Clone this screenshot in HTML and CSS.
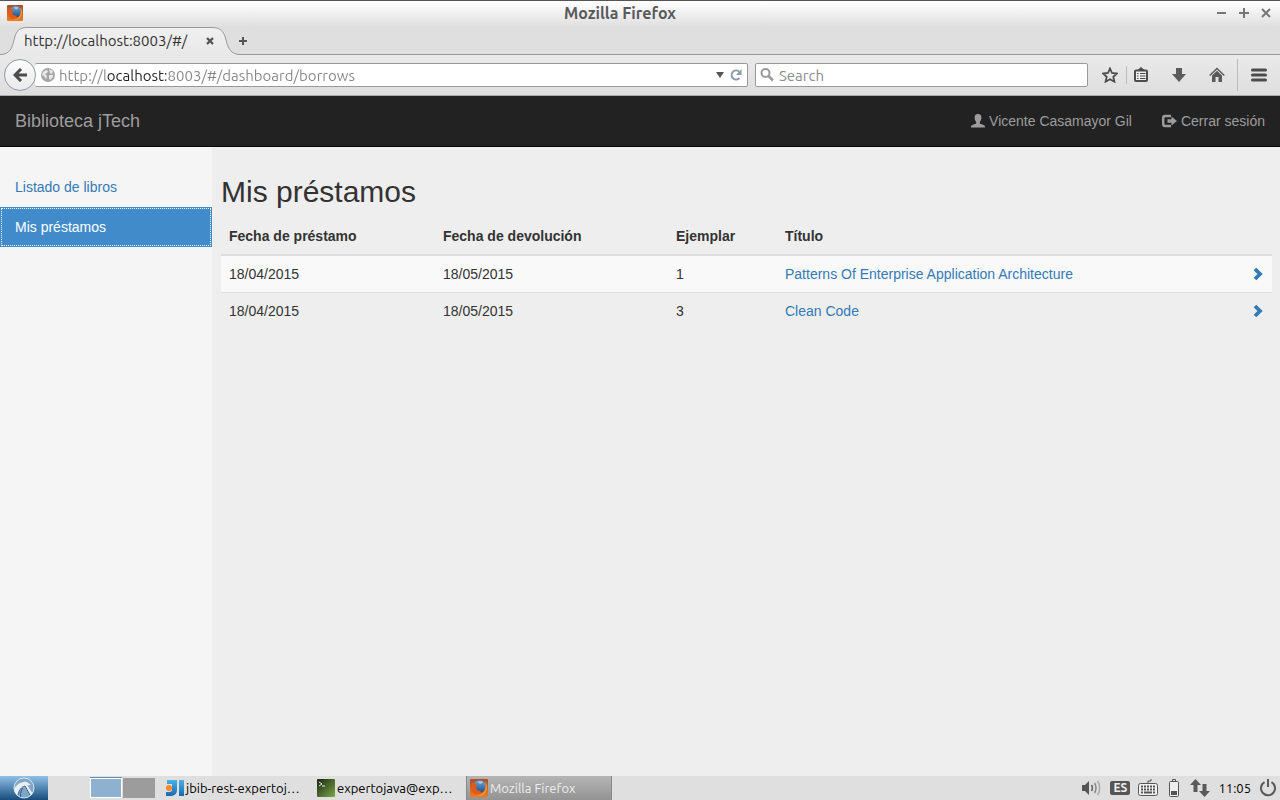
FILE: index.html
```html
<!DOCTYPE html>
<html lang="es">
<head>
<meta charset="utf-8">
<title>Biblioteca jTech</title>
<link rel="stylesheet" href="styles.css">
</head>
<body>
<svg class="defs" width="0" height="0" aria-hidden="true">
  <defs>
    <linearGradient id="fox-bg" x1="0" y1="0" x2="0" y2="1"><stop offset="0" stop-color="#a8502f"/><stop offset="1" stop-color="#f07b21"/></linearGradient>
    <linearGradient id="globe-bg" x1="0" y1="0" x2="0" y2="1"><stop offset="0" stop-color="#69a9dc"/><stop offset="1" stop-color="#163f78"/></linearGradient>
    <linearGradient id="tab-bg" x1="0" y1="0" x2="0" y2="1"><stop offset="0" stop-color="#f0f0f0"/><stop offset="1" stop-color="#e8e8e8"/></linearGradient>
    <linearGradient id="term-bg" x1="0" y1="0" x2="1" y2="1"><stop offset="0" stop-color="#182514"/><stop offset="1" stop-color="#7da845"/></linearGradient>
    <linearGradient id="idea-bg" x1="0" y1="0" x2="0" y2="1"><stop offset="0" stop-color="#48b0e8"/><stop offset="1" stop-color="#1c69ae"/></linearGradient>
    <symbol id="firefox" viewBox="0 0 18 18">
      <rect width="18" height="18" rx="1" fill="url(#fox-bg)"/>
      <circle cx="9.500" cy="8.500" r="7" fill="url(#globe-bg)"/>
      <path d="M8 2.500C10 1.500 12 2 13 3L11 5L9 4.500Z" fill="#9cc8ea"/>
      <path d="M2.500 3L4 4.500L7 5L5.500 6.500L7.500 7.500L6 8.500C6 11 8 12.500 11 11.500C9.500 13.500 12 14.500 15 11.500C14 15 11 17 8 16.500C3 15.500 0.500 11 1.500 6.500Z" fill="#e05a1a"/>
      <path d="M15 2.500C17.500 5.500 18 11 15 14.500C12.500 17.300 8 17.500 5 15.500C10 16.500 14 14 15 10C15.600 7 15.500 5 15 2.500Z" fill="#f08f2b"/>
    </symbol>
  </defs>
</svg>

<div class="browser">
  <div class="titlebar">
    <svg class="titlebar-logo" width="16" height="16"><use href="#firefox"/></svg>
    <span class="titlebar-name">Mozilla Firefox</span>
    <div class="window-buttons">
      <button type="button" aria-label="Minimizar"><svg width="10" height="10" viewBox="0 0 10 10"><path d="M0 5H9" stroke="#777" stroke-width="2"/></svg></button>
      <button type="button" aria-label="Maximizar"><svg width="10" height="10" viewBox="0 0 10 10"><path d="M0 5H10M5 0V10" stroke="#777" stroke-width="2"/></svg></button>
      <button type="button" aria-label="Cerrar"><svg width="10" height="10" viewBox="0 0 10 10"><path d="M1 1L9 9M9 1L1 9" stroke="#777" stroke-width="2"/></svg></button>
    </div>
  </div>
  <div class="tabstrip">
    <div class="tab">
      <svg class="tab-shape" width="240" height="30" viewBox="0 0 240 30"><path d="M0 30V28.500C10 28.500 12 22 14 14C16 5 19 1.500 27 1.500H212C220 1.500 224 5 226 14C228 22 231 28.500 240 28.500V30Z" fill="url(#tab-bg)"/><path d="M0 28.500C10 28.500 12 22 14 14C16 5 19 1.500 27 1.500H212C220 1.500 224 5 226 14C228 22 231 28.500 240 28.500" fill="none" stroke="#999"/></svg>
      <span class="tab-title">http://localhost:8003/#/</span>
      <button type="button" class="tab-close" aria-label="Cerrar pestaña"><svg width="8" height="8" viewBox="0 0 8 8"><path d="M1 1L7 7M7 1L1 7" stroke="#555" stroke-width="2.400"/></svg></button>
    </div>
    <button type="button" class="tab-new" aria-label="Nueva pestaña"><svg width="8" height="8" viewBox="0 0 8 8"><path d="M0 4H8M4 0V8" stroke="#555" stroke-width="2"/></svg></button>
  </div>
  <div class="toolbar">
    <button type="button" class="back" aria-label="Atrás"><svg width="14" height="14" viewBox="0 0 14 14"><path d="M14 7H3M8 1L2 7L8 13" fill="none" stroke="#4c4c4c" stroke-width="3"/></svg></button>
    <div class="field address">
      <svg width="14" height="14" viewBox="0 0 14 14"><circle cx="7" cy="7" r="7" fill="#a5a5a5"/><path d="M2 4L5 2L7 3L6 5L4 6L6 8L5 11L3 8L1 7ZM8 1L12 3L11 6L9 5ZM8 7L12 7L12 9L9 12L8 10Z" fill="#e9e9e9"/></svg>
      <input class="address-input" type="text" aria-label="Dirección" value="http://localhost:8003/#/dashboard/borrows">
      <button type="button" aria-label="Historial"><svg width="8" height="6" viewBox="0 0 8 6"><path d="M0 0H8L4 6Z" fill="#555"/></svg></button>
      <button type="button" class="reload" aria-label="Recargar"><svg width="12" height="12" viewBox="0 0 12 12"><path d="M9.500 9A4.500 4.500 0 1 1 9 2.500" fill="none" stroke="#8a9baa" stroke-width="2"/><path d="M11.500 0V6H6Z" fill="#8a9baa"/></svg></button>
    </div>
    <div class="field search">
      <svg width="14" height="14" viewBox="0 0 14 14"><circle cx="5.500" cy="5" r="4" fill="none" stroke="#999" stroke-width="2"/><path d="M8.500 8L13 12.500" stroke="#999" stroke-width="2.500"/></svg>
      <input type="search" aria-label="Buscar" placeholder="Search">
    </div>
    <div class="tools">
      <button type="button" aria-label="Marcador"><svg width="16" height="16" viewBox="0 0 16 16"><path d="M8 1.500L10 6L15 6.500L11.300 9.800L12.400 14.700L8 12.200L3.600 14.700L4.700 9.800L1 6.500L6 6Z" fill="none" stroke="#4c4c4c" stroke-width="1.800"/></svg></button>
      <span class="divider"></span>
      <button type="button" aria-label="Marcadores"><svg width="14" height="16" viewBox="0 0 14 16"><path d="M3 3.500L7 0L11 3.500Z" fill="#4c4c4c"/><rect x="1" y="3.500" width="12" height="10.500" rx="1" fill="#eee" stroke="#4c4c4c" stroke-width="2"/><path d="M3 6.500H4.500M6 6.500H11.500M3 9H4.500M6 9H11.500M3 11.500H4.500M6 11.500H11.500" stroke="#4c4c4c"/></svg></button>
      <button type="button" aria-label="Descargas"><svg width="14" height="14" viewBox="0 0 14 14"><path d="M4 0H10V6H14L7 14L0 6H4Z" fill="#5a5a5a"/></svg></button>
      <button type="button" aria-label="Inicio"><svg width="16" height="16" viewBox="0 0 16 16"><path d="M0.700 8.500L8 1.500L15.300 8.500" fill="none" stroke="#5a5a5a" stroke-width="1.500"/><path d="M3 8.500L8 3.800L13 8.500V15H9.500V10H6.500V15H3Z" fill="#5a5a5a"/></svg></button>
      <span class="divider divider-tall"></span>
      <button type="button" aria-label="Menú"><svg width="16" height="14" viewBox="0 0 16 14"><path d="M1.500 2H14.500M1.500 7H14.500M1.500 12H14.500" stroke="#4c4c4c" stroke-width="3" stroke-linecap="round"/></svg></button>
    </div>
  </div>
</div>

<header class="navbar">
  <a class="brand" href="#">Biblioteca jTech</a>
  <nav class="user-nav">
    <a href="#"><svg width="14" height="14" viewBox="0 0 14 14"><path d="M7 0C9.500 0 10.400 1.500 10.400 3.800C10.400 5.600 9.500 7 8.800 8V9.500L13 11.300C13.700 11.700 14 12.200 14 13.500H0C0 12.200 0.300 11.700 1 11.300L5.200 9.500V8C4.500 7 3.600 5.600 3.600 3.800C3.600 1.500 4.500 0 7 0Z" fill="currentColor"/></svg>Vicente Casamayor Gil</a>
    <a href="#"><svg width="15" height="14" viewBox="0 0 15 14"><path d="M9 2H3C1.800 2 1.200 2.800 1.200 4V10C1.200 11.200 1.800 12 3 12H9" fill="none" stroke="currentColor" stroke-width="2.400"/><path d="M5.500 5.200H9.500V2.500L15 7L9.500 11.500V8.800H5.500Z" fill="currentColor"/></svg>Cerrar sesión</a>
  </nav>
</header>

<div class="page">
  <nav class="sidebar">
    <a href="#">Listado de libros</a>
    <a class="active" href="#" aria-current="page">Mis préstamos</a>
  </nav>
  <main class="content">
    <h1>Mis préstamos</h1>
    <table class="borrows">
      <colgroup><col class="col-start"><col class="col-end"><col class="col-copy"><col><col class="col-open"></colgroup>
      <thead>
        <tr><th scope="col">Fecha de préstamo</th><th scope="col">Fecha de devolución</th><th scope="col">Ejemplar</th><th scope="col">Título</th><th></th></tr>
      </thead>
      <tbody>
        <tr><td>18/04/2015</td><td>18/05/2015</td><td>1</td><td><a href="#">Patterns Of Enterprise Application Architecture</a></td><td class="open"><a href="#" aria-label="Ver préstamo"><svg width="11" height="14" viewBox="0 0 11 14"><path d="M2 2L7 7L2 12" fill="none" stroke="currentColor" stroke-width="3.800"/></svg></a></td></tr>
        <tr><td>18/04/2015</td><td>18/05/2015</td><td>3</td><td><a href="#">Clean Code</a></td><td class="open"><a href="#" aria-label="Ver préstamo"><svg width="11" height="14" viewBox="0 0 11 14"><path d="M2 2L7 7L2 12" fill="none" stroke="currentColor" stroke-width="3.800"/></svg></a></td></tr>
      </tbody>
    </table>
  </main>
</div>

<footer class="taskbar">
  <button type="button" class="start" aria-label="Menú de inicio"><svg width="24" height="22" viewBox="0 0 24 22"><circle cx="12" cy="11" r="10" fill="#7fa6c6" stroke="#d9e5ee"/><path d="M2.500 11C6 6 11 4 15 5L19 8L15.500 8.500C18 12 19 15 21 16L18 18.500L13 10C9 11 6.500 14 6 19C3.500 17 2 14 2.500 11Z" fill="#e6eef4"/><path d="M6 18C7 13 9.500 10 13 9L18 18M11 10.500C9 13 8.500 16 8.500 20" fill="none" stroke="#2d5f8b"/></svg></button>
  <div class="pager"><button type="button" class="desk current" aria-label="Escritorio 1"></button><button type="button" class="desk" aria-label="Escritorio 2"></button></div>
  <div class="tasks">
    <button type="button" class="task"><svg width="18" height="18" viewBox="0 0 18 18"><path d="M1 1H11V11C11 15 8 17 4 17H0V13H3C5 13 6 12 6 11V5H1Z" fill="url(#idea-bg)"/><rect x="13" y="1" width="5" height="16" fill="url(#idea-bg)"/><circle cx="3" cy="9" r="3" fill="#f58a2b"/></svg><span>jbib-rest-expertoj…</span></button>
    <button type="button" class="task"><svg width="18" height="18" viewBox="0 0 18 18"><rect width="18" height="18" rx="1" fill="url(#term-bg)"/><path d="M2 3L5 5L2 7M5 7H8" fill="none" stroke="#e8eee4"/></svg><span>expertojava@exp…</span></button>
    <button type="button" class="task focused"><svg width="18" height="18"><use href="#firefox"/></svg><span>Mozilla Firefox</span></button>
  </div>
  <div class="tray">
    <svg width="20" height="18" viewBox="0 0 20 18"><path d="M0 6H3L7 2V16L3 12H0Z" fill="#555"/><path d="M9.500 6Q11.500 9 9.500 12" fill="none" stroke="#666" stroke-width="1.500"/><path d="M12.500 4Q15.500 9 12.500 14" fill="none" stroke="#888" stroke-width="1.500"/><path d="M15.500 2Q20 9 15.500 16" fill="none" stroke="#aaa" stroke-width="1.500"/></svg>
    <span class="keyboard-lang">ES</span>
    <svg width="20" height="18" viewBox="0 0 20 18"><rect x="0.500" y="4.500" width="19" height="12" rx="2" fill="#f2f2f2" stroke="#555"/><path d="M10 4V2H13V0" fill="none" stroke="#555"/><path d="M3 7.500H17M3 10.500H17" stroke="#555" stroke-width="2" stroke-dasharray="2 1"/><path d="M3 13.500H5M6 13.500H14M15 13.500H17" stroke="#555" stroke-width="2"/></svg>
    <svg class="battery" width="10" height="18" viewBox="0 0 10 18"><path d="M3.500 2V0.500H6.500V2" fill="none" stroke="#555"/><rect x="0.500" y="2.500" width="9" height="15" rx="1" fill="#eee" stroke="#555"/><rect x="2" y="12" width="6" height="4" fill="#555"/></svg>
    <svg width="20" height="18" viewBox="0 0 20 18"><path d="M5.500 0L11 6H7.500V13H3.500V6H0ZM14.500 18L9 12H12.500V5H16.500V12H20Z" fill="#5a5a5a"/></svg>
    <time>11:05</time>
    <button type="button" aria-label="Apagar"><svg width="18" height="18" viewBox="0 0 18 18"><path d="M5.500 3.200A7 7 0 1 0 12.500 3.200M9 0V8" fill="none" stroke="#5a5a5a" stroke-width="2"/></svg></button>
  </div>
</footer>
</body>
</html>
```

FILE: styles.css
```css
* { box-sizing: border-box; }
body {
  margin: 0;
  min-height: 100vh;
  display: flex;
  flex-direction: column;
  background: #eee;
  color: #333;
  font: 14px/20px "Liberation Sans", Arial, sans-serif;
}
svg { display: block; flex: none; }
.defs { position: absolute; }
button { border: 0; padding: 0; background: none; font: inherit; color: inherit; display: flex; align-items: center; justify-content: center; }
a { color: #337ab7; text-decoration: none; }

/* Browser chrome */
.browser {
  font-family: Ubuntu, "Noto Sans", sans-serif;
  font-size: 15px;
  background: linear-gradient(#fff 0, #dfdfdf 26px, #dfdfdf 100%);
  border-top: 1px solid #555;
}
.titlebar { display: flex; align-items: center; height: 25px; padding: 0 9px 2px 7px; }
.titlebar-name { flex: 1; text-align: center; font-size: 16px; font-weight: bold; color: #5a5a5a; }
.window-buttons { display: flex; gap: 12px; }
.tabstrip { display: flex; align-items: flex-end; height: 28px; }
.tab { position: relative; display: flex; align-items: center; width: 238px; height: 28px; padding: 1px 24px 0; color: #333; }
.tab-shape { position: absolute; left: 0; top: 0; }
.tab-title { position: relative; flex: 1; }
.tab-close { position: relative; }
.tab-new { width: 10px; height: 28px; padding-top: 1px; }
.toolbar {
  display: flex;
  align-items: center;
  height: 42px;
  padding: 0 13px 0 4px;
  background: linear-gradient(#eaeaea, #dedede);
  border-top: 1px solid #999;
  border-bottom: 1px solid #aaa;
}
.tab, .tab-new { z-index: 1; }
.back { position: relative; width: 32px; height: 32px; border: 1px solid #8f98a3; border-radius: 50%; background: linear-gradient(#fdfdfd, #e9e9e9); flex: none; }
.field { display: flex; align-items: center; height: 24px; background: #fff; border: 1px solid #999; border-radius: 2px; }
.field input { flex: 1; min-width: 0; height: 22px; padding: 0; border: 0; outline: 0; background: none; color: #999; font: inherit; }
.field input::placeholder { color: #8c8c8c; opacity: 1; }
.address { flex: 716; margin-left: -1px; padding: 0 5px 0 6px; border-left: 0; gap: 4px; }
.field .address-input {
  background: linear-gradient(90deg, #858585 48px, #222 48px, #222 107px, #858585 107px);
  background-clip: text;
  -webkit-text-fill-color: transparent;
}
.reload { margin-left: 2px; }
.search { flex: 330; margin-left: 7px; padding: 0 4px; gap: 5px; }
.tools { display: flex; align-items: center; margin-left: 14px; }
.tools button + button { margin-left: 23px; }
.divider { width: 1px; height: 18px; margin: 0 7px 0 8px; background: #bbb; }
.tools .divider + button + button { margin-left: 24px; }
.divider-tall { height: 32px; margin: 0 13px 0 12px; }

/* Application header */
.navbar { display: flex; align-items: center; justify-content: space-between; height: 51px; padding: 0 15px; background: #222; border-bottom: 1px solid #080808; }
.navbar a { color: #9d9d9d; }
.navbar .brand { font-size: 18px; }
.user-nav { display: flex; gap: 30px; }
.user-nav a { display: flex; align-items: center; gap: 4px; }

/* Page body */
.page { flex: 1; display: flex; }
.sidebar { width: 212px; flex: none; padding-top: 20px; background: #f5f5f5; }
.sidebar a { display: block; padding: 10px 15px; }
.sidebar .active { color: #fff; background: #428bca; outline: 1px dotted #fff; outline-offset: -2px; }
.content { flex: 1; padding: 28px 8px 20px 9px; }
h1 { margin: 0 0 10px; font-size: 30px; line-height: 33px; font-weight: 500; }
.borrows { width: 100%; table-layout: fixed; border-collapse: collapse; }
.col-start { width: 214px; }
.col-end { width: 233px; }
.col-copy { width: 109px; }
.col-open { width: 40px; }
th, td { padding: 8px; text-align: left; border-top: 1px solid #ddd; }
th { border-top: 0; border-bottom: 2px solid #ddd; }
tbody tr:nth-child(odd) { background: #f9f9f9; }
.open a { display: flex; justify-content: flex-end; }

/* Desktop taskbar */
.taskbar { display: flex; align-items: center; height: 24px; background: #dfdfdf; color: #000; font: 13px/18px Ubuntu, "Noto Sans", sans-serif; }
.start { width: 48px; height: 24px; background: linear-gradient(#8fc0e8, #174c7c); }
.pager { display: flex; margin-left: 42px; gap: 1px; }
.desk { width: 32px; height: 20px; background: #9c9c9c; }
.desk.current { background: #8fb1d0; border: 1px solid #fff; box-shadow: 0 -1px #5e8cb3; }
.tasks { display: flex; flex: 1; margin-left: 9px; gap: 5px; min-width: 0; }
.task { width: 146px; height: 24px; justify-content: flex-start; gap: 2px; padding-left: 2px; white-space: nowrap; }
.task.focused { padding-left: 3px; color: #eee; background: linear-gradient(#b5b5b5, #939393); border: 1px solid #888; border-width: 0 1px; }
.tray { display: flex; align-items: center; gap: 8px; padding-right: 3px; }
.battery { margin: 0 3px; }
.keyboard-lang { width: 20px; border-radius: 2px; background: #555; color: #eee; font-size: 12px; font-weight: bold; line-height: 14px; text-align: center; }
```
